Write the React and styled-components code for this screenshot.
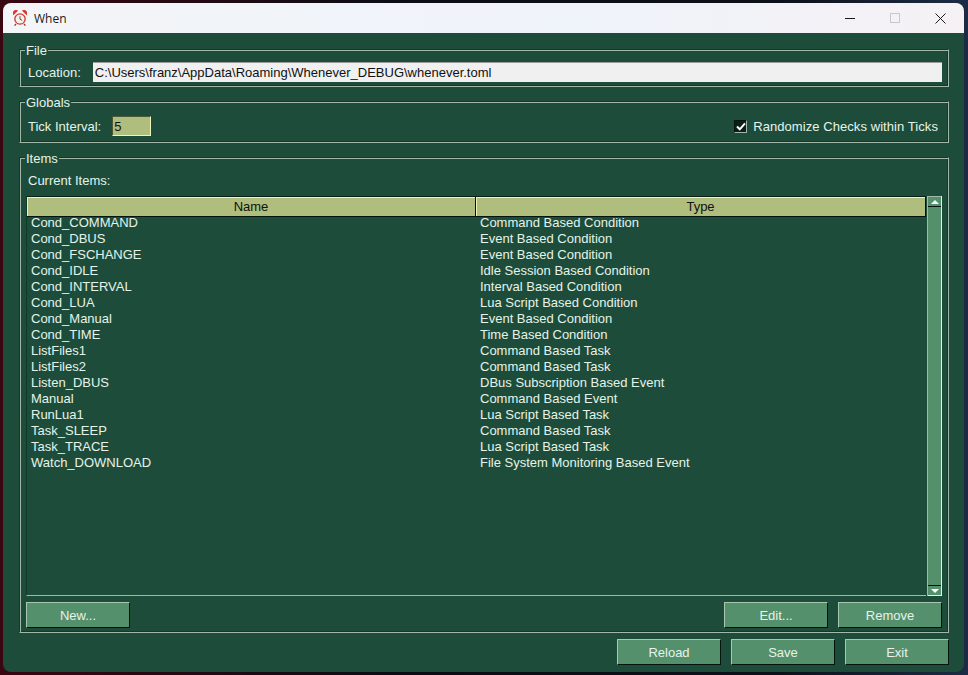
import styled, { createGlobalStyle } from 'styled-components';

const items = [
  ['Cond_COMMAND', 'Command Based Condition'],
  ['Cond_DBUS', 'Event Based Condition'],
  ['Cond_FSCHANGE', 'Event Based Condition'],
  ['Cond_IDLE', 'Idle Session Based Condition'],
  ['Cond_INTERVAL', 'Interval Based Condition'],
  ['Cond_LUA', 'Lua Script Based Condition'],
  ['Cond_Manual', 'Event Based Condition'],
  ['Cond_TIME', 'Time Based Condition'],
  ['ListFiles1', 'Command Based Task'],
  ['ListFiles2', 'Command Based Task'],
  ['Listen_DBUS', 'DBus Subscription Based Event'],
  ['Manual', 'Command Based Event'],
  ['RunLua1', 'Lua Script Based Task'],
  ['Task_SLEEP', 'Command Based Task'],
  ['Task_TRACE', 'Lua Script Based Task'],
  ['Watch_DOWNLOAD', 'File System Monitoring Based Event']
];

const AlarmIcon = () => (
  <svg width="14" height="16" viewBox="0 0 14 16">
    <path d="M0.4 5.2 A3.2 3.2 0 0 1 5 0.8 Z" fill="#dd3a30" />
    <path d="M13.6 5.2 A3.2 3.2 0 0 0 9 0.8 Z" fill="#dd3a30" />
    <path d="M3 14 L1.6 15.6 M11 14 L12.4 15.6" stroke="#a82c26" strokeWidth="1.3" />
    <circle cx="7" cy="9" r="5.8" fill="#cf352c" />
    <circle cx="7" cy="9" r="4.5" fill="#f6f1e8" />
    <path d="M7 6.2 V9.2 L9.2 10.4" stroke="#555" strokeWidth="1" fill="none" />
  </svg>
);

const CloseIcon = () => (
  <svg width="11" height="11" viewBox="0 0 11 11">
    <path d="M0.5 0.5 L10.5 10.5 M10.5 0.5 L0.5 10.5" stroke="#1a1a1a" strokeWidth="1" />
  </svg>
);

const CheckMark = () => (
  <svg width="10" height="9" viewBox="0 0 10 9">
    <path d="M1 4.5 L3.8 7.3 L9 1.4" stroke="#fff" strokeWidth="2" fill="none" />
  </svg>
);

const App = () => {
  return (
    <Desktop>
      <GlobalStyle />
      <Window>
        <TitleBar>
          <TitleLeft>
            <AlarmIcon />
            <TitleText>When</TitleText>
          </TitleLeft>
          <WindowControls>
            <MinimizeGlyph />
            <MaximizeGlyph />
            <CloseIcon />
          </WindowControls>
        </TitleBar>
        <Body>
          <Groups>
            <Group>
              <GroupLabel>File</GroupLabel>
              <FileRow>
                <Label>Location:</Label>
                <PathInput>C:\Users\franz\AppData\Roaming\Whenever_DEBUG\whenever.toml</PathInput>
              </FileRow>
            </Group>
            <Group>
              <GroupLabel>Globals</GroupLabel>
              <GlobalsRow>
                <Label>Tick Interval:</Label>
                <TickInput>5</TickInput>
                <CheckRow>
                  <CheckBox>
                    <CheckMark />
                  </CheckBox>
                  <CheckLabel>Randomize Checks within Ticks</CheckLabel>
                </CheckRow>
              </GlobalsRow>
            </Group>
            <ItemsGroup>
              <GroupLabel>Items</GroupLabel>
              <CurrentLabel>Current Items:</CurrentLabel>
              <TableWrap>
                <List>
                  <HeaderRow>
                    <HeaderCell>Name</HeaderCell>
                    <HeaderCell>Type</HeaderCell>
                  </HeaderRow>
                  {items.map(([name, type]) => (
                    <Row key={name}>
                      <span>{name}</span>
                      <span>{type}</span>
                    </Row>
                  ))}
                </List>
                <ScrollBar>
                  <ScrollButton>
                    <Arrow />
                  </ScrollButton>
                  <ScrollThumb />
                  <ScrollButton $down>
                    <Arrow $down />
                  </ScrollButton>
                </ScrollBar>
              </TableWrap>
              <ItemButtons>
                <Button>New...</Button>
                <RightButtons>
                  <Button>Edit...</Button>
                  <Button>Remove</Button>
                </RightButtons>
              </ItemButtons>
            </ItemsGroup>
          </Groups>
          <Footer>
            <Button>Reload</Button>
            <Button>Save</Button>
            <Button>Exit</Button>
          </Footer>
        </Body>
      </Window>
    </Desktop>
  );
};

const GlobalStyle = createGlobalStyle`
  html, body {
    margin: 0;
    height: 100%;
    overflow: hidden;
  }
  #root {
    height: 100%;
  }
  * {
    box-sizing: border-box;
  }
`;

const Desktop = styled.div`
  height: 100%;
  padding: 3px 4px 3px 3px;
  background: linear-gradient(90deg, #3a0612 0%, #0c0d14 40%, #0c1018 80%, #1c2c44 100%);
  font-family: 'Liberation Sans', Arial, sans-serif;
  font-size: 13px;
`;

const Window = styled.div`
  height: 100%;
  display: flex;
  flex-direction: column;
  border-radius: 8px;
  overflow: hidden;
  background: #1d4d3a;
`;

const TitleBar = styled.div`
  height: 30px;
  flex: none;
  display: flex;
  align-items: center;
  justify-content: space-between;
  background: linear-gradient(90deg, #f3f5f8, #eff3fa 60%, #f5f1f5);
`;

const TitleLeft = styled.div`
  display: flex;
  align-items: center;
  gap: 7px;
  padding-left: 10px;
`;

const TitleText = styled.span`
  font-family: 'Open Sans', sans-serif;
  font-size: 12px;
  color: #1a1a1a;
`;

const WindowControls = styled.div`
  display: flex;
  align-items: center;
  gap: 35px;
  padding-right: 18px;
`;

const MinimizeGlyph = styled.div`
  width: 10px;
  height: 1px;
  background: #1a1a1a;
`;

const MaximizeGlyph = styled.div`
  width: 10px;
  height: 10px;
  border: 1px solid #c8c8c8;
`;

const Body = styled.div`
  flex: 1;
  display: flex;
  flex-direction: column;
  gap: 6px;
  padding: 16px 15px 7px 16px;
  color: #e6f3ea;
  min-height: 0;
`;

const Groups = styled.div`
  flex: 1;
  display: flex;
  flex-direction: column;
  gap: 14px;
  min-height: 0;
`;

const Group = styled.div`
  position: relative;
  border: 1px solid;
  border-color: #0f3a2a #a3b8a8 #a3b8a8 #0f3a2a;
  box-shadow: inset 1px 1px 0 #a3b8a8, inset -1px -1px 0 #0f3a2a;
`;

const ItemsGroup = styled(Group)`
  flex: 1;
  display: flex;
  flex-direction: column;
  min-height: 0;
  padding: 14px 6px 4px 6px;
`;

const GroupLabel = styled.div`
  position: absolute;
  top: -7px;
  left: 5px;
  padding: 0 1px;
  line-height: 16px;
  background: #1d4d3a;
`;

const FileRow = styled.div`
  display: flex;
  align-items: center;
  gap: 12px;
  padding: 12px 6px 4px 8px;
`;

const GlobalsRow = styled.div`
  display: flex;
  align-items: center;
  gap: 11px;
  padding: 14px 10px 6px 8px;
`;

const Label = styled.span`
  line-height: 18px;
  padding-top: 1px;
  white-space: nowrap;
`;

const CheckLabel = styled(Label)`
  letter-spacing: 0.07px;
`;

const PathInput = styled.div`
  flex: 1;
  height: 20px;
  padding: 0 2px;
  line-height: 19px;
  color: #111;
  background: #f0f0f0;
  border-top: 1px solid #9a9a9a;
`;

const TickInput = styled.div`
  width: 39px;
  height: 20px;
  padding: 0 1px;
  line-height: 19px;
  color: #111;
  background: #afbd7d;
  border: 1px solid;
  border-color: #4a5a38 #f0f4bc #f0f4bc #4a5a38;
`;

const CheckRow = styled.div`
  margin-left: auto;
  display: flex;
  align-items: center;
  gap: 6px;
`;

const CheckBox = styled.div`
  width: 13px;
  height: 13px;
  display: flex;
  align-items: center;
  justify-content: center;
  background: #0a1f17;
  border: 1px solid;
  border-color: #05140e #a3b8a8 #a3b8a8 #05140e;
`;

const CurrentLabel = styled.div`
  padding-left: 2px;
  line-height: 17px;
  height: 16px;
  margin-bottom: 8px;
`;

const TableWrap = styled.div`
  flex: 1;
  display: flex;
  min-height: 0;
`;

const List = styled.div`
  flex: 1;
  border-left: 1px solid #0f3a2a;
  border-bottom: 1px solid #a3b8a8;
`;

const HeaderRow = styled.div`
  display: grid;
  grid-template-columns: 449px 1fr;
  height: 19px;
  border-top: 1px solid #0a1f17;
`;

const HeaderCell = styled.div`
  line-height: 19px;
  text-align: center;
  color: #111;
  background: #afbd7d;
  border-right: 1px solid #05140e;
  border-bottom: 1px solid #05140e;
  box-shadow: inset 1px 1px 0 #f0f4bc;
`;

const Row = styled.div`
  display: grid;
  grid-template-columns: 449px 1fr;
  height: 16px;
  line-height: 16px;
  & > span {
    padding-left: 4px;
  }
`;

const ScrollBar = styled.div`
  width: 15px;
  margin-left: 1px;
  display: flex;
  flex-direction: column;
  background: #55906c;
  border-left: 1px solid #a3b8a8;
  border-right: 1px solid #f0f4bc;
`;

const ScrollButton = styled.div`
  height: 11px;
  flex: none;
  display: flex;
  align-items: center;
  justify-content: center;
  border-bottom: 1px solid ${p => (p.$down ? '#f0f4bc' : '#05140e')};
  border-top: 1px solid ${p => (p.$down ? '#05140e' : '#a3b8a8')};
`;

const Arrow = styled.div`
  width: 0;
  height: 0;
  border-left: 4px solid transparent;
  border-right: 4px solid transparent;
  border-bottom: ${p => (p.$down ? 'none' : '4px solid #fff')};
  border-top: ${p => (p.$down ? '4px solid #fff' : 'none')};
`;

const ScrollThumb = styled.div`
  flex: 1;
`;

const ItemButtons = styled.div`
  display: flex;
  justify-content: space-between;
  margin-top: 6px;
`;

const RightButtons = styled.div`
  display: flex;
  gap: 10px;
`;

const Button = styled.button`
  width: 104px;
  height: 26px;
  padding: 0;
  font: inherit;
  color: #e6f3ea;
  background: #55906c;
  border: 1px solid;
  border-color: #a8c8b0 #05140e #05140e #a8c8b0;
`;

const Footer = styled.div`
  display: flex;
  justify-content: flex-end;
  gap: 10px;
`;

export default App;
